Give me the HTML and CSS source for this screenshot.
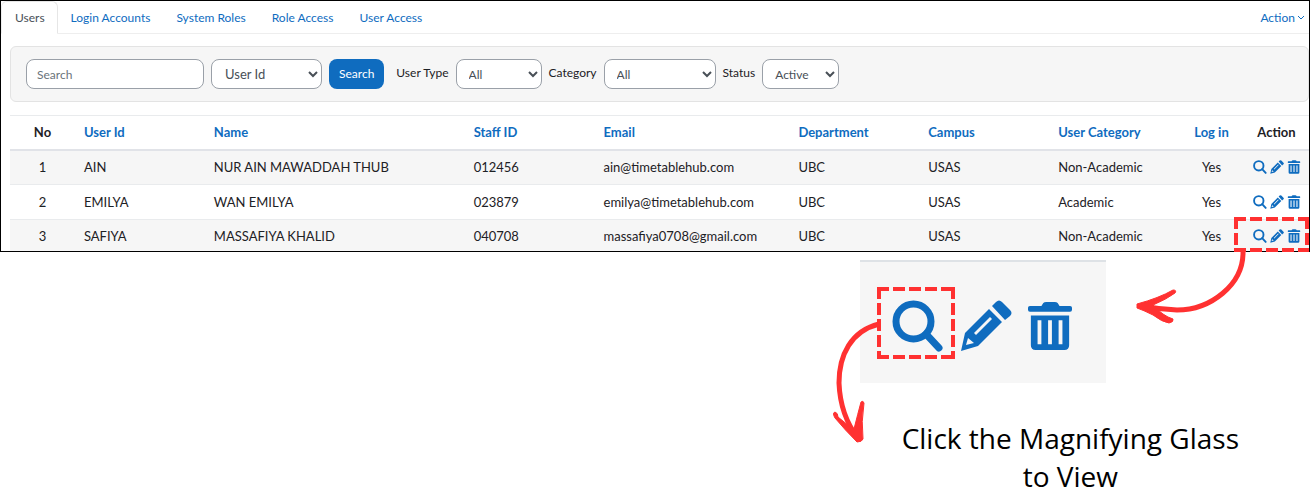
FILE: index.html
```html
<!DOCTYPE html>
<html lang="en">
<head>
<meta charset="utf-8">
<title>Users</title>
<link rel="stylesheet" href="styles.css">
</head>
<body>
<svg class="sprite" aria-hidden="true">
  <symbol id="search" viewBox="0 0 52 52"><circle cx="21.500" cy="21.500" r="17.500" fill="none" stroke="currentColor" stroke-width="7"/><path d="M34 34 47 48" stroke="currentColor" stroke-width="7" stroke-linecap="round"/></symbol>
  <symbol id="pencil" viewBox="0 0 52 52"><path fill="currentColor" fill-rule="evenodd" d="M1 51 5 33 29 9 42 22 18 46ZM8 38 6 45 14 43ZM14 33 16 35 32 19 30 17ZM32 6 36 2Q39-1 42 2L50 10Q53 13 50 16L45 20Z"/></symbol>
  <symbol id="trash" viewBox="0 0 46 52"><path fill="currentColor" fill-rule="evenodd" d="M2 5H14L16 2Q17 1 19 1H28Q30 1 31 2L33 5H44Q46 5 46 7V9Q46 11 44 11H2Q0 11 0 9V7Q0 5 2 5ZM3 15H43V46Q43 51 38 51H8Q3 51 3 46ZM10 20V45H14V20ZM21 20V45H25V20ZM32 20V45H36V20Z"/></symbol>
</svg>
<main class="guide">
  <section class="app">
    <nav class="tabs">
      <a class="tab tab-active" href="#">Users</a>
      <a class="tab" href="#">Login Accounts</a>
      <a class="tab" href="#">System Roles</a>
      <a class="tab" href="#">Role Access</a>
      <a class="tab" href="#">User Access</a>
      <button class="menu" type="button">Action <svg class="caret" viewBox="0 0 8 6"><path d="M1 1 4 4 7 1"/></svg></button>
    </nav>
    <form class="filters">
      <input class="field field-search" type="text" placeholder="Search" aria-label="Search">
      <select class="field field-by" aria-label="Search by"><option>User Id</option></select>
      <button class="submit" type="button">Search</button>
      <label class="label" for="type">User Type</label>
      <select class="field field-type" id="type"><option>All</option></select>
      <label class="label" for="category">Category</label>
      <select class="field field-category" id="category"><option>All</option></select>
      <label class="label" for="status">Status</label>
      <select class="field field-status" id="status"><option>Active</option></select>
    </form>
    <table class="users">
      <colgroup><col class="c5"><col class="c10"><col class="c20"><col class="c10"><col class="c15"><col class="c10"><col class="c10"><col class="c10"><col class="c5"><col class="c5"></colgroup>
      <thead>
        <tr><th class="center">No</th><th><a href="#">User Id</a></th><th><a href="#">Name</a></th><th><a href="#">Staff ID</a></th><th><a href="#">Email</a></th><th><a href="#">Department</a></th><th><a href="#">Campus</a></th><th><a href="#">User Category</a></th><th class="center"><a href="#">Log in</a></th><th class="center">Action</th></tr>
      </thead>
      <tbody>
        <tr><td class="center">1</td><td>AIN</td><td>NUR AIN MAWADDAH THUB</td><td>012456</td><td>ain@timetablehub.com</td><td>UBC</td><td>USAS</td><td>Non-Academic</td><td class="center">Yes</td><td><div class="actions"><a href="#" aria-label="View"><svg class="icon"><use href="#search"/></svg></a><a href="#" aria-label="Edit"><svg class="icon"><use href="#pencil"/></svg></a><a href="#" aria-label="Delete"><svg class="icon"><use href="#trash"/></svg></a></div></td></tr>
        <tr><td class="center">2</td><td>EMILYA</td><td>WAN EMILYA</td><td>023879</td><td>emilya@timetablehub.com</td><td>UBC</td><td>USAS</td><td>Academic</td><td class="center">Yes</td><td><div class="actions"><a href="#" aria-label="View"><svg class="icon"><use href="#search"/></svg></a><a href="#" aria-label="Edit"><svg class="icon"><use href="#pencil"/></svg></a><a href="#" aria-label="Delete"><svg class="icon"><use href="#trash"/></svg></a></div></td></tr>
        <tr><td class="center">3</td><td>SAFIYA</td><td>MASSAFIYA KHALID</td><td>040708</td><td>massafiya0708@gmail.com</td><td>UBC</td><td>USAS</td><td>Non-Academic</td><td class="center">Yes</td><td><div class="actions"><a href="#" aria-label="View"><svg class="icon"><use href="#search"/></svg></a><a href="#" aria-label="Edit"><svg class="icon"><use href="#pencil"/></svg></a><a href="#" aria-label="Delete"><svg class="icon"><use href="#trash"/></svg></a></div></td></tr>
      </tbody>
    </table>
  </section>
  <section class="detail">
    <div class="closeup">
      <svg class="big"><use href="#search"/></svg>
      <svg class="big"><use href="#pencil"/></svg>
      <svg class="big big-trash"><use href="#trash"/></svg>
    </div>
    <p class="caption">Click the Magnifying Glass<br>to View</p>
  </section>
  <svg class="marks" viewBox="811 0 500 498" aria-hidden="true">
    <g class="dashes">
      <path d="M1234 219H1309"/><path d="M1236 217V252"/><path d="M1307 217V252"/><path d="M1234 250H1309"/>
      <path d="M877 289H955"/><path d="M879 287V359"/><path d="M953 287V359"/><path d="M877 357H955"/>
    </g>
    <g class="arrows">
      <path class="shaft" d="M1243 251C1244 285 1210 310 1177 310Q1158 309 1141 306"/>
      <path class="head" d="M1137 304Q1159 298 1173 290Q1177 290 1175 293Q1167 299 1153 305Q1163 316 1173 319Q1174 322 1169 323Q1162 322 1153 315Q1143 310 1137 308Z"/>
      <path class="shaft" d="M879 324C851 331 839 355 839 383C840 408 847 424 858 438"/>
      <path class="head" d="M857 442Q845 430 835 418Q832 413 835 412Q838 413 838 417Q846 424 854 429Q858 413 861 402Q863 400 864 403Q861 422 863 439Q862 442 857 442Z"/>
    </g>
  </svg>
</main>
</body>
</html>
```
FILE: styles.css
```css
* { box-sizing: border-box; }
body { margin: 0; background: #fff; color: #1d2125; font: 13px/18px Lato, sans-serif; }
a { color: #0f6cbf; text-decoration: none; }
.sprite { position: absolute; width: 0; height: 0; }
.guide { position: relative; }
.app { margin-right: 1px; border: 1px solid #000; }

.tabs { display: flex; align-items: flex-end; height: 33px; border-bottom: 1px solid #eee; font-size: 12px; }
.tab { height: 32px; padding: 7px 12px 7px 13px; border: 1px solid transparent; line-height: 18px; margin-right: -1px; }
.tab-active { height: 33px; margin-bottom: -1px; color: #495057; background: #fff; border-color: #e6e6e6 #e6e6e6 #fff; border-left-color: #eee; border-radius: 6px 6px 0 0; }
.menu { display: flex; align-items: center; gap: 2px; height: 32px; margin-left: auto; padding: 2px 4px 0; border: 0; background: none; color: #0f6cbf; font: inherit; }
.caret { width: 8px; height: 6px; fill: none; stroke: currentColor; }

.filters { display: flex; align-items: center; height: 56px; margin: 12px 0 13px 9px; padding: 0 15px; background: #f6f6f6; border: 1px solid #e3e3e3; border-radius: 6px; font-size: 12px; }
.field { height: 30px; margin-right: 7px; padding: 0 10px; border: 1px solid #9aa0a8; border-radius: 8px; background: #fff; color: #495057; font: inherit; }
.field::placeholder { color: #6a737b; }
select.field { padding: 0 0 0 8px; }
.field-search { width: 178px; }
.field-by { width: 111px; }
select.field-by { font-size: 13px; padding-left: 9px; }
.field-type { width: 86px; }
.field-category { width: 112px; }
.field-status { width: 77px; }
.submit { height: 30px; margin-right: 12px; padding: 0 10px; border: 0; border-radius: 8px; background: #0f6cbf; color: #fff; font: inherit; }
.label { margin-right: 7px; padding-bottom: 3px; }

.users { width: calc(100% - 9px); margin-left: 9px; border-collapse: collapse; table-layout: fixed; }
.users th, .users td { padding: 0 9px; text-align: left; white-space: nowrap; border-top: 1px solid #e9ebed; }
.users th { height: 34px; border-bottom: 2px solid #e1e3e8; }
.users td { height: 35px; }
.users tbody tr:nth-child(odd) { background: #f6f6f6; }
.users tbody tr:last-child td { height: 31px; padding-top: 2px; }
.users .center { padding: 0; text-align: center; }
.c5 { width: 5%; }
.c10 { width: 10%; }
.c15 { width: 15%; }
.c20 { width: 20%; }
.actions { display: flex; gap: 3px; color: #0f6cbf; }
.actions a { display: flex; }
.icon { width: 14px; height: 14px; }

.detail { display: flex; flex-direction: column; align-items: flex-end; padding-top: 8px; }
.closeup { display: flex; gap: 16px; width: 246px; height: 123px; margin-right: 205px; padding: 38px 32px; background: #f6f6f6; border-top: 2px solid #dee2e6; color: #0f6cbf; }
.big { width: 52px; height: 52px; }
.big-trash { width: 44px; }
.caption { margin: 36px 72px 0 0; color: #000; font: 28px/38px "Open Sans", sans-serif; text-align: center; }

.marks { position: absolute; top: 0; right: 0; width: 500px; height: 498px; fill: none; stroke: #ff3131; pointer-events: none; }
.dashes { stroke-width: 4; stroke-dasharray: 12 4; }
.shaft { stroke-width: 5; }
.head { fill: #ff3131; stroke-width: 1; stroke-linejoin: round; }
```
